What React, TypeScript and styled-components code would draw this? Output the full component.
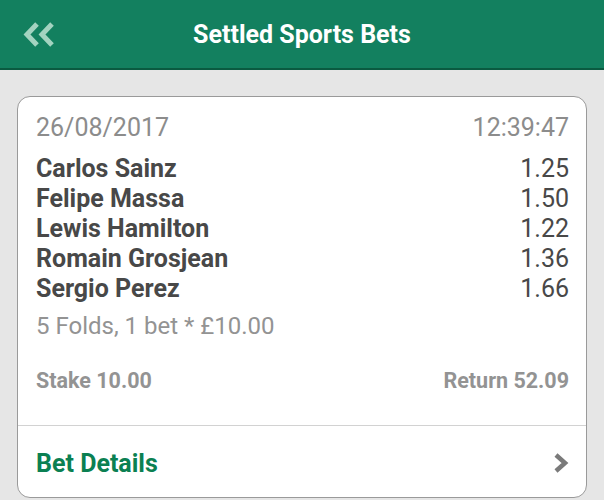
import React from "react";
import styled, { createGlobalStyle } from "styled-components";

const Global = createGlobalStyle`
  html, body { margin: 0; padding: 0; }
  body {
    background: #e6e6e6;
    font-family: Roboto, "Noto Sans", "Liberation Sans", sans-serif;
    -webkit-font-smoothing: antialiased;
  }
`;

const Page = styled.div`
  width: 604px;
  height: 500px;
  overflow: hidden;
  background: #e6e6e6;
`;

const Header = styled.header`
  height: 68px;
  background: #13805f;
  border-bottom: 2px solid #0a5a40;
  display: grid;
  grid-template-columns: 1fr auto 1fr;
  align-items: center;
`;

const BackButton = styled.button`
  justify-self: start;
  margin-left: 22px;
  padding: 0;
  border: 0;
  background: none;
  display: flex;
  align-items: center;
  cursor: pointer;
`;

const Title = styled.h1`
  margin: 0;
  color: #ffffff;
  font-size: 25px;
  font-weight: 700;
  letter-spacing: 0;
`;

const Main = styled.main`
  padding: 26px 17px 0 17px;
`;

const Card = styled.section`
  background: #ffffff;
  border: 1.5px solid #9a9a9a;
  border-radius: 13px;
  height: 402px;
  box-sizing: border-box;
  display: flex;
  flex-direction: column;
`;

const Body = styled.div`
  padding: 15px 17px 30px 18px;
  border-bottom: 1.5px solid #d2d2d2;
`;

const Row = styled.div<{ $gap?: number }>`
  display: flex;
  justify-content: space-between;
  align-items: center;
  height: 30px;
  margin-top: ${(p) => p.$gap ?? 0}px;
  font-size: 25px;
`;

const Meta = styled.span`
  color: #8c8c8c;
  font-weight: 400;
`;

const Name = styled.span`
  color: #484848;
  font-weight: 700;
`;

const Odds = styled.span`
  color: #484848;
  font-weight: 400;
`;

const Summary = styled.div`
  height: 30px;
  margin-top: 8px;
  display: flex;
  align-items: center;
  color: #939393;
  font-size: 24px;
`;

const Totals = styled.div`
  height: 30px;
  margin-top: 24px;
  display: flex;
  justify-content: space-between;
  align-items: center;
  color: #939393;
  font-size: 21.5px;
  font-weight: 700;
`;

const Footer = styled.a`
  display: flex;
  justify-content: space-between;
  align-items: center;
  padding: 22px 17px 0 18px;
  height: 30px;
  color: #0b8052;
  font-size: 25px;
  font-weight: 700;
  text-decoration: none;
`;

const selections = [
  { name: "Carlos Sainz", odds: "1.25" },
  { name: "Felipe Massa", odds: "1.50" },
  { name: "Lewis Hamilton", odds: "1.22" },
  { name: "Romain Grosjean", odds: "1.36" },
  { name: "Sergio Perez", odds: "1.66" },
];

export default function App() {
  return (
    <Page>
      <Global />
      <Header>
        <BackButton aria-label="Back">
          <svg width="34" height="27" viewBox="0 0 34 27">
            <polyline
              points="15,3 5,13.5 15,24"
              fill="none"
              stroke="#a3d3c0"
              strokeWidth="5"
              strokeLinejoin="miter"
            />
            <polyline
              points="30,3 20,13.5 30,24"
              fill="none"
              stroke="#a3d3c0"
              strokeWidth="5"
              strokeLinejoin="miter"
            />
          </svg>
        </BackButton>
        <Title>Settled Sports Bets</Title>
        <span />
      </Header>
      <Main>
        <Card>
          <Body>
            <Row>
              <Meta>26/08/2017</Meta>
              <Meta>12:39:47</Meta>
            </Row>
            {selections.map((s, i) => (
              <Row key={s.name} $gap={i === 0 ? 11 : 0}>
                <Name>{s.name}</Name>
                <Odds>{s.odds}</Odds>
              </Row>
            ))}
            <Summary>5 Folds, 1 bet * £10.00</Summary>
            <Totals>
              <span>Stake 10.00</span>
              <span>Return 52.09</span>
            </Totals>
          </Body>
          <Footer href="#">
            <span>Bet Details</span>
            <svg width="16" height="22" viewBox="0 0 16 22">
              <polyline
                points="3,3 12,11 3,19"
                fill="none"
                stroke="#7a7a7a"
                strokeWidth="4.5"
              />
            </svg>
          </Footer>
        </Card>
      </Main>
    </Page>
  );
}
